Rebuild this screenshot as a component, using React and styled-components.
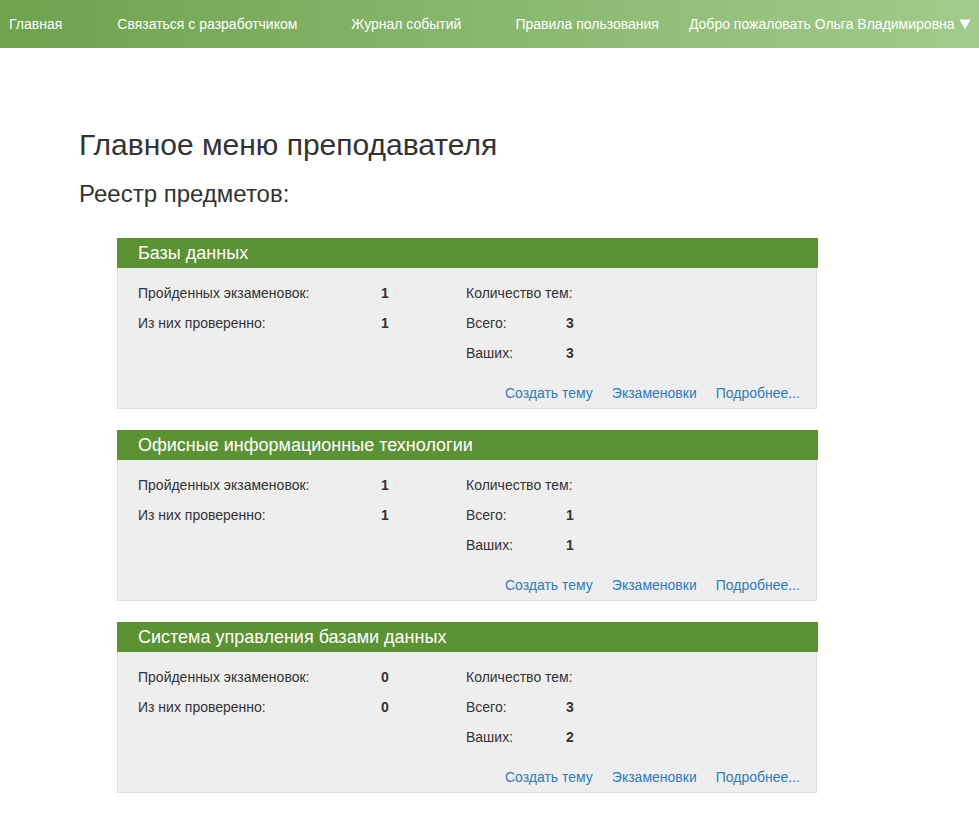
import React from "react";
import styled, { createGlobalStyle } from "styled-components";

const Global = createGlobalStyle`
  html, body { margin: 0; padding: 0; background: #fff; }
  body { font-family: "Liberation Sans", Arial, sans-serif; font-size: 14px; color: #333; }
  * { box-sizing: border-box; }
`;

const Navbar = styled.nav`
  height: 48px;
  display: flex;
  align-items: center;
  padding: 0 0 0 9px;
  background: linear-gradient(to right, #6ea24e 0%, #88b76e 50%, #a2ca8c 100%);
  overflow: hidden;
`;

const NavLink = styled.a`
  display: inline-flex;
  align-items: center;
  gap: 4px;
  color: #fff;
  font-size: 14px;
  line-height: 48px;
  text-decoration: none;
  white-space: nowrap;
  margin-right: ${(p) => p.$after}px;
`;

const Caret = styled.svg`
  width: 12px;
  height: 11px;
  flex: none;
`;

const Main = styled.main`
  padding: 80px 0 40px 79px;
`;

const Title = styled.h2`
  margin: 0;
  font-size: 30px;
  font-weight: 500;
  line-height: 33px;
  color: #333;
`;

const Subtitle = styled.h3`
  margin: 20px 0 31px;
  font-size: 24px;
  font-weight: 500;
  line-height: 26px;
  color: #333;
`;

const CardList = styled.div`
  display: flex;
  flex-direction: column;
  gap: 21px;
  margin-left: 38px;
  width: 701px;
`;

const Card = styled.section``;

const CardHeader = styled.div`
  background: #5b9233;
  color: #fff;
  font-size: 18px;
  line-height: 30px;
  height: 30px;
  padding-left: 21px;
`;

const CardBody = styled.div`
  background: #eeeeee;
  border: 1px solid #dddddd;
  border-top: none;
  margin-right: 1px;
  padding: 15px 16px 5px 20px;
`;

const Stats = styled.div`
  display: grid;
  grid-template-columns: 328px 1fr;
`;

const StatBlock = styled.div`
  display: grid;
  grid-template-columns: ${(p) => p.$labelWidth}px auto;
  grid-auto-rows: 20px;
  row-gap: 10px;
  align-content: start;
  line-height: 20px;
`;

const Label = styled.span`
  font-size: 14px;
  white-space: nowrap;
  grid-column: ${(p) => (p.$wide ? "1 / -1" : "auto")};
`;

const Value = styled.span`
  font-weight: bold;
  font-size: 14px;
`;

const Links = styled.div`
  display: flex;
  justify-content: flex-end;
  gap: 19px;
  margin-top: 20px;
  line-height: 20px;
`;

const Link = styled.a`
  color: #337ab7;
  text-decoration: none;
  font-size: 14px;
`;

const subjects = [
  { name: "Базы данных", passed: 1, checked: 1, total: 3, yours: 3 },
  { name: "Офисные информационные технологии", passed: 1, checked: 1, total: 1, yours: 1 },
  { name: "Система управления базами данных", passed: 0, checked: 0, total: 3, yours: 2 },
];

export default function App() {
  return (
    <>
      <Global />
      <Navbar>
        <NavLink href="#" $after={55}>Главная</NavLink>
        <NavLink href="#" $after={54}>Связаться с разработчиком</NavLink>
        <NavLink href="#" $after={54}>Журнал событий</NavLink>
        <NavLink href="#" $after={30}>Правила пользования</NavLink>
        <NavLink href="#" $after={0}>
          Добро пожаловать Ольга Владимировна
          <Caret viewBox="0 0 12 11" aria-hidden="true">
            <path d="M0.5 0.5 L11.5 0.5 L6 10.5 Z" fill="#fff" />
          </Caret>
        </NavLink>
      </Navbar>
      <Main>
        <Title>Главное меню преподавателя</Title>
        <Subtitle>Реестр предметов:</Subtitle>
        <CardList>
          {subjects.map((s) => (
            <Card key={s.name}>
              <CardHeader>{s.name}</CardHeader>
              <CardBody>
                <Stats>
                  <StatBlock $labelWidth={243}>
                    <Label>Пройденных экзаменовок:</Label>
                    <Value>{s.passed}</Value>
                    <Label>Из них проверенно:</Label>
                    <Value>{s.checked}</Value>
                  </StatBlock>
                  <StatBlock $labelWidth={100}>
                    <Label $wide>Количество тем:</Label>
                    <Label>Всего:</Label>
                    <Value>{s.total}</Value>
                    <Label>Ваших:</Label>
                    <Value>{s.yours}</Value>
                  </StatBlock>
                </Stats>
                <Links>
                  <Link href="#">Создать тему</Link>
                  <Link href="#">Экзаменовки</Link>
                  <Link href="#">Подробнее...</Link>
                </Links>
              </CardBody>
            </Card>
          ))}
        </CardList>
      </Main>
    </>
  );
}
